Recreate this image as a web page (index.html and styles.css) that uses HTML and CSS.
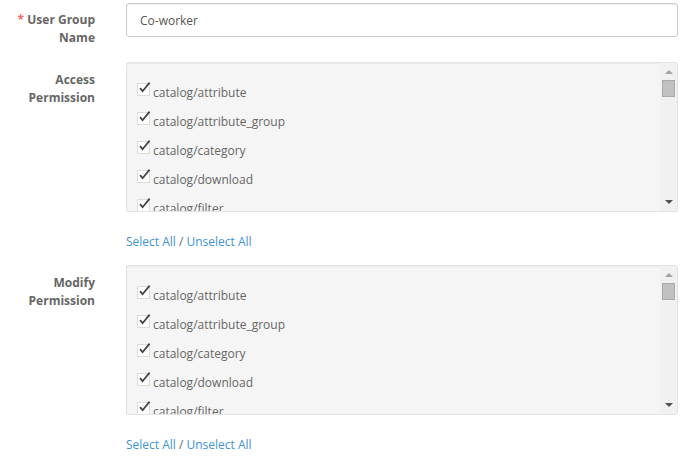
FILE: index.html
```html
<!DOCTYPE html>
<html>
<head>
<meta charset="utf-8">
<link rel="stylesheet" href="styles.css">
</head>
<body>
<form class="form">
  <div class="group group-first">
    <label class="label"><span class="req">*</span> User Group Name</label>
    <div class="control">
      <input class="input" type="text" value="Co-worker">
    </div>
  </div>

  <div class="group">
    <label class="label">Access Permission</label>
    <div class="control">
      <div class="well">
        <div class="list">
          <div class="item"><span class="cb"><svg viewBox="0 0 14 14" width="14" height="14"><path d="M3 7.2 L5.6 10.2 L12.6 1.6" fill="none" stroke="#444" stroke-width="1.8"/></svg></span>catalog/attribute</div>
          <div class="item"><span class="cb"><svg viewBox="0 0 14 14" width="14" height="14"><path d="M3 7.2 L5.6 10.2 L12.6 1.6" fill="none" stroke="#444" stroke-width="1.8"/></svg></span>catalog/attribute_group</div>
          <div class="item"><span class="cb"><svg viewBox="0 0 14 14" width="14" height="14"><path d="M3 7.2 L5.6 10.2 L12.6 1.6" fill="none" stroke="#444" stroke-width="1.8"/></svg></span>catalog/category</div>
          <div class="item"><span class="cb"><svg viewBox="0 0 14 14" width="14" height="14"><path d="M3 7.2 L5.6 10.2 L12.6 1.6" fill="none" stroke="#444" stroke-width="1.8"/></svg></span>catalog/download</div>
          <div class="item"><span class="cb"><svg viewBox="0 0 14 14" width="14" height="14"><path d="M3 7.2 L5.6 10.2 L12.6 1.6" fill="none" stroke="#444" stroke-width="1.8"/></svg></span>catalog/filter</div>
        </div>
        <div class="sbar">
          <span class="arrow up"></span>
          <span class="thumb"></span>
          <span class="arrow down"></span>
        </div>
      </div>
      <div class="links"><a href="#">Select All</a> / <a href="#">Unselect All</a></div>
    </div>
  </div>

  <div class="group">
    <label class="label">Modify Permission</label>
    <div class="control">
      <div class="well">
        <div class="list">
          <div class="item"><span class="cb"><svg viewBox="0 0 14 14" width="14" height="14"><path d="M3 7.2 L5.6 10.2 L12.6 1.6" fill="none" stroke="#444" stroke-width="1.8"/></svg></span>catalog/attribute</div>
          <div class="item"><span class="cb"><svg viewBox="0 0 14 14" width="14" height="14"><path d="M3 7.2 L5.6 10.2 L12.6 1.6" fill="none" stroke="#444" stroke-width="1.8"/></svg></span>catalog/attribute_group</div>
          <div class="item"><span class="cb"><svg viewBox="0 0 14 14" width="14" height="14"><path d="M3 7.2 L5.6 10.2 L12.6 1.6" fill="none" stroke="#444" stroke-width="1.8"/></svg></span>catalog/category</div>
          <div class="item"><span class="cb"><svg viewBox="0 0 14 14" width="14" height="14"><path d="M3 7.2 L5.6 10.2 L12.6 1.6" fill="none" stroke="#444" stroke-width="1.8"/></svg></span>catalog/download</div>
          <div class="item"><span class="cb"><svg viewBox="0 0 14 14" width="14" height="14"><path d="M3 7.2 L5.6 10.2 L12.6 1.6" fill="none" stroke="#444" stroke-width="1.8"/></svg></span>catalog/filter</div>
        </div>
        <div class="sbar">
          <span class="arrow up"></span>
          <span class="thumb"></span>
          <span class="arrow down"></span>
        </div>
      </div>
      <div class="links"><a href="#">Select All</a> / <a href="#">Unselect All</a></div>
    </div>
  </div>
</form>
</body>
</html>
```

FILE: styles.css
```css
* { box-sizing: border-box; }
html, body { margin: 0; padding: 0; background: #fff; }
body {
  font-family: "Open Sans", "Liberation Sans", sans-serif;
  font-size: 12px;
  color: #666;
}
.form {
  padding: 3px 8px 0 0;
}
.group {
  display: grid;
  grid-template-columns: 95px 1fr;
  column-gap: 31px;
  margin-bottom: 14px;
}
.group.group-first { margin-bottom: 15px; }
.label {
  text-align: right;
  font-weight: 700;
  color: #666;
  line-height: 18px;
  padding-top: 9px;
}
.group-first .label { padding-top: 8px; }
.req { color: #f56b6b; font-weight: 700; }
.input {
  display: block;
  width: 100%;
  height: 34px;
  padding: 6px 13px;
  font-family: inherit;
  font-size: 12px;
  color: #555;
  border: 1px solid #ccc;
  border-radius: 3px;
  background: #fff;
  box-shadow: inset 0 1px 1px rgba(0,0,0,.075);
  outline: none;
}
.well {
  display: flex;
  height: 150px;
  background: #f5f5f5;
  border: 1px solid #e3e3e3;
  border-radius: 2px;
  box-shadow: inset 0 1px 1px rgba(0,0,0,.05);
  overflow: hidden;
}
.list {
  flex: 1;
  overflow: hidden;
  padding: 15px 0 0 10px;
}
.item {
  display: flex;
  align-items: flex-start;
  height: 29px;
  line-height: 29px;
  font-size: 12px;
  color: #666;
  white-space: nowrap;
}
.cb {
  flex: none;
  width: 13px;
  height: 13px;
  margin-top: 5px;
  margin-right: 3px;
  border: 1px solid #dcdcdc;
  background: #fff;
  position: relative;
}
.cb svg {
  position: absolute;
  left: -1px;
  top: -3px;
}
.sbar {
  flex: none;
  width: 17px;
  background: #f1f1f1;
  display: flex;
  flex-direction: column;
  align-items: center;
  padding-top: 7px;
}
.arrow {
  width: 0;
  height: 0;
  border-left: 4px solid transparent;
  border-right: 4px solid transparent;
}
.arrow.up { border-bottom: 4px solid #a3a3a3; }
.arrow.down { border-top: 4px solid #505050; margin-top: auto; margin-bottom: 7px; }
.thumb {
  width: 13px;
  height: 17px;
  margin-top: 6px;
  background: #c1c1c1;
  border: 1px solid #a9a9a9;
}
.links {
  margin-top: 21px;
  line-height: 18px;
  color: #666;
}
.links a {
  color: #3f93d3;
  text-decoration: none;
}
```
